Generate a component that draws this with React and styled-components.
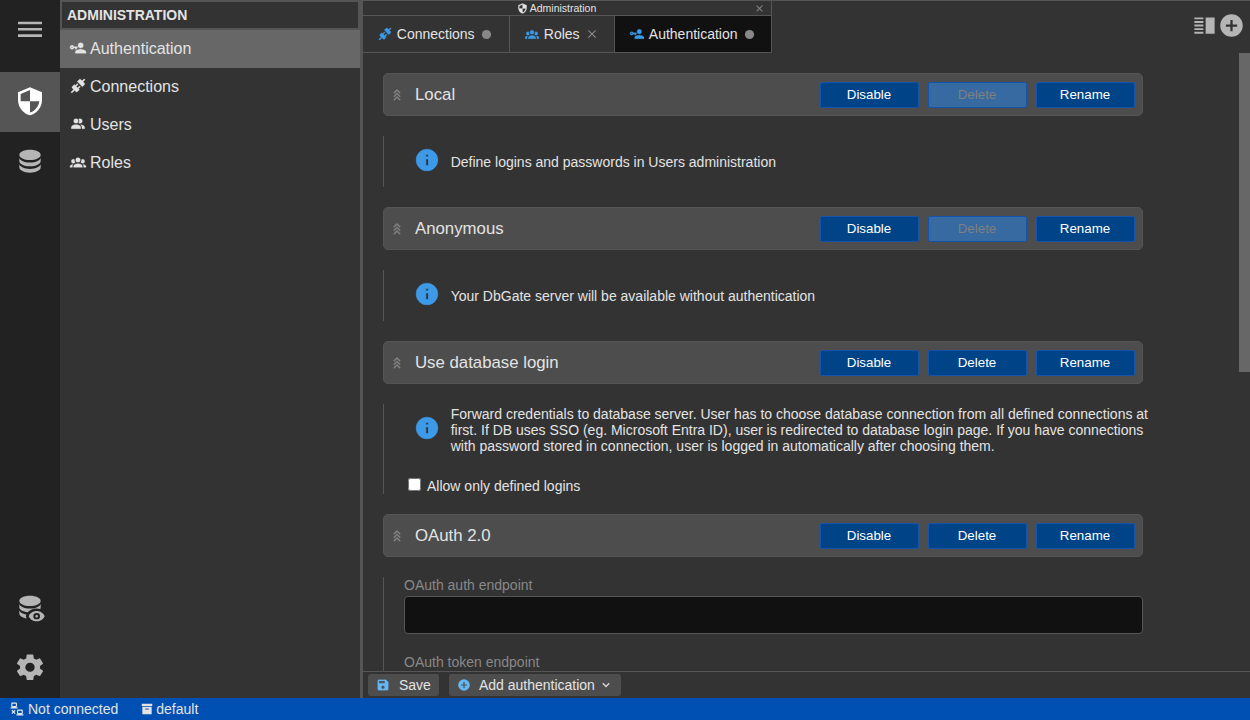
import React from 'react';
import styled, { createGlobalStyle, css } from 'styled-components';

const GlobalStyle = createGlobalStyle`
  * { box-sizing: border-box; }
  body {
    margin: 0;
    background: #333;
    color: #e3e3e3;
    font-family: "Liberation Sans", Arial, sans-serif;
    font-size: 14px;
    overflow: hidden;
  }
`;

const CIRCLE = 'M12,2A10,10 0 0,0 2,12A10,10 0 0,0 12,22A10,10 0 0,0 22,12A10,10 0 0,0 12,2Z';

const icons = {
  menu: 'M3,6H21V8H3V6M3,11H21V13H3V11M3,16H21V18H3V16Z',
  shield: 'M12,12H19C18.47,16.11 15.72,19.78 12,20.92V12H5V6.3L12,3.19M12,1L3,5V11C3,16.55 6.84,21.73 12,23C17.16,21.73 21,16.55 21,11V5L12,1Z',
  database: 'M12,3C7.58,3 4,4.79 4,7C4,9.21 7.58,11 12,11C16.42,11 20,9.21 20,7C20,4.79 16.42,3 12,3M4,9V12C4,14.21 7.58,16 12,16C16.42,16 20,14.21 20,12V9C20,11.21 16.42,13 12,13C7.58,13 4,11.21 4,9M4,14V17C4,19.21 7.58,21 12,21C16.42,21 20,19.21 20,17V14C20,16.21 16.42,18 12,18C7.58,18 4,16.21 4,14Z',
  databaseEye: 'M12,3C7.58,3 4,4.79 4,7C4,9.21 7.58,11 12,11C16.42,11 20,9.21 20,7C20,4.79 16.42,3 12,3M4,9V12C4,13.9 6.65,15.5 10.2,15.9C11.9,14.1 14.3,13 17,13C18,13 18.9,13.15 19.75,13.4C19.9,13 20,12.4 20,12V9C20,11.21 16.42,13 12,13C7.58,13 4,11.21 4,9M4,14V17C4,18.9 6.6,20.5 9.5,20.9L8.85,19L9.3,17.75C6.2,17.2 4,15.8 4,14M17,15C14.27,15 11.94,16.66 11,19C11.94,21.34 14.27,23 17,23C19.73,23 22.06,21.34 23,19C22.06,16.66 19.73,15 17,15M17,21.5A2.5,2.5 0 0,1 14.5,19A2.5,2.5 0 0,1 17,16.5A2.5,2.5 0 0,1 19.5,19A2.5,2.5 0 0,1 17,21.5M17,18A1,1 0 0,0 16,19A1,1 0 0,0 17,20A1,1 0 0,0 18,19A1,1 0 0,0 17,18Z',
  cog: 'M12,15.5A3.5,3.5 0 0,1 8.5,12A3.5,3.5 0 0,1 12,8.5A3.5,3.5 0 0,1 15.5,12A3.5,3.5 0 0,1 12,15.5M19.43,12.97C19.47,12.65 19.5,12.33 19.5,12C19.5,11.67 19.47,11.34 19.43,11L21.54,9.37C21.73,9.22 21.78,8.95 21.66,8.73L19.66,5.27C19.54,5.05 19.27,4.96 19.05,5.05L16.56,6.05C16.04,5.66 15.5,5.32 14.87,5.07L14.5,2.42C14.46,2.18 14.25,2 14,2H10C9.75,2 9.54,2.18 9.5,2.42L9.13,5.07C8.5,5.32 7.96,5.66 7.44,6.05L4.95,5.05C4.73,4.96 4.46,5.05 4.34,5.27L2.34,8.73C2.21,8.95 2.27,9.22 2.46,9.37L4.57,11C4.53,11.34 4.5,11.67 4.5,12C4.5,12.33 4.53,12.65 4.57,12.97L2.46,14.63C2.27,14.78 2.21,15.05 2.34,15.27L4.34,18.73C4.46,18.95 4.73,19.03 4.95,18.95L7.44,17.94C7.96,18.34 8.5,18.68 9.13,18.93L9.5,21.58C9.54,21.82 9.75,22 10,22H14C14.25,22 14.46,21.82 14.5,21.58L14.87,18.93C15.5,18.67 16.04,18.34 16.56,17.94L19.05,18.95C19.27,19.03 19.54,18.95 19.66,18.73L21.66,15.27C21.78,15.05 21.73,14.78 21.54,14.63L19.43,12.97Z',
  connection: 'M21.4 7.5C22.2 8.3 22.2 9.6 21.4 10.3L18.6 13.1L10.8 5.3L13.6 2.5C14.4 1.7 15.7 1.7 16.4 2.5L18.2 4.3L21.2 1.3L22.6 2.7L19.6 5.7L21.4 7.5M15.6 13.3L14.2 11.9L11.4 14.7L9.3 12.6L12.1 9.8L10.7 8.4L7.9 11.2L6.4 9.8L3.6 12.6C2.8 13.4 2.8 14.7 3.6 15.4L5.4 17.2L1.4 21.2L2.8 22.6L6.8 18.6L8.6 20.4C9.4 21.2 10.7 21.2 11.4 20.4L14.2 17.6L12.8 16.2L15.6 13.3Z',
  users: 'M16 17V19H2V17S2 13 9 13 16 17 16 17M12.5 7.5A3.5 3.5 0 1 0 9 11A3.5 3.5 0 0 0 12.5 7.5M15.94 13A5.32 5.32 0 0 1 18 17V19H22V17S22 13.37 15.94 13M15 4A3.39 3.39 0 0 0 13.07 4.59A5 5 0 0 1 13.07 10.41A3.39 3.39 0 0 0 15 11A3.5 3.5 0 0 0 15 4Z',
  roles: 'M12,5.5A3.5,3.5 0 0,1 15.5,9A3.5,3.5 0 0,1 12,12.5A3.5,3.5 0 0,1 8.5,9A3.5,3.5 0 0,1 12,5.5M5,8C5.56,8 6.08,8.15 6.53,8.42C6.38,9.85 6.8,11.27 7.66,12.38C7.16,13.34 6.16,14 5,14A3,3 0 0,1 2,11A3,3 0 0,1 5,8M19,8A3,3 0 0,1 22,11A3,3 0 0,1 19,14C17.84,14 16.84,13.34 16.34,12.38C17.2,11.27 17.62,9.85 17.47,8.42C17.92,8.15 18.44,8 19,8M5.5,18.25C5.5,16.18 8.41,14.5 12,14.5C15.59,14.5 18.5,16.18 18.5,18.25V20H5.5V18.25M0,20V18.5C0,17.11 1.89,15.94 4.45,15.6C3.86,16.28 3.5,17.22 3.5,18.25V20H0M24,20H20.5V18.25C20.5,17.22 20.14,16.28 19.55,15.6C22.11,15.94 24,17.11 24,18.5V20Z',
  auth: 'M11 10V12H10V14H8V12H5.83C5.42 13.17 4.31 14 3 14A3 3 0 0 1 0 11A3 3 0 0 1 3 8C4.31 8 5.42 8.83 5.83 10H11M3 10A1 1 0 0 0 2 11A1 1 0 0 0 3 12A1 1 0 0 0 4 11A1 1 0 0 0 3 10M16 14C18.67 14 24 15.34 24 18V20H8V18C8 15.34 13.33 14 16 14M16 12A4 4 0 0 1 12 8A4 4 0 0 1 16 4A4 4 0 0 1 20 8A4 4 0 0 1 16 12Z',
  info: 'M13,9H11V7H13M13,17H11V11H13M' + CIRCLE.slice(1),
  plus: 'M17,13H13V17H11V13H7V11H11V7H13V11H17M' + CIRCLE.slice(1),
  dot: CIRCLE,
  close: 'M19,6.41L17.59,5L12,10.59L6.41,5L5,6.41L10.59,12L5,17.59L6.41,19L12,13.41L17.59,19L19,17.59L13.41,12L19,6.41Z',
  tripleUp: 'M16.59,9.42L12,4.83L7.41,9.42L6,8L12,2L18,8L16.59,9.42M16.59,15.42L12,10.83L7.41,15.42L6,14L12,8L18,14L16.59,15.42M16.59,21.42L12,16.83L7.41,21.42L6,20L12,14L18,20L16.59,21.42Z',
  save: 'M15,9H5V5H15M12,19A3,3 0 0,1 9,16A3,3 0 0,1 12,13A3,3 0 0,1 15,16A3,3 0 0,1 12,19M17,3H5C3.89,3 3,3.9 3,5V19A2,2 0 0,0 5,21H19A2,2 0 0,0 21,19V7L17,3Z',
  chevronDown: 'M7.41,8.58L12,13.17L16.59,8.58L18,10L12,16L6,10L7.41,8.58Z',
  archive: 'M3,3H21V7H3V3M4,8H20V21H4V8M9.5,11A0.5,0.5 0 0,0 9,11.5V13H15V11.5A0.5,0.5 0 0,0 14.5,11H9.5Z',
  disconnected: 'M4,1C2.89,1 2,1.89 2,3V7C2,8.11 2.89,9 4,9H1V11H13V9H10C11.11,9 12,8.11 12,7V3C12,1.89 11.11,1 10,1H4M4,3H10V7H4V3M14,13C12.89,13 12,13.89 12,15V19C12,20.11 12.89,21 14,21H11V23H23V21H20C21.11,21 22,20.11 22,19V15C22,13.89 21.11,13 20,13H14M3.88,13.46L2.46,14.88L4.59,17L2.46,19.12L3.88,20.54L6,18.41L8.12,20.54L9.54,19.12L7.41,17L9.54,14.88L8.12,13.46L6,15.59L3.88,13.46M14,15H20V19H14V15Z',
  split: 'M3,4.8H11V6.5H3V4.8M3,8H11V9.7H3V8M3,11.2H11V12.9H3V11.2M3,14.4H11V16.1H3V14.4M3,17.6H11V19.3H3V17.6M13,4.8H21V19.3H13V4.8Z',
};

const Glyph = styled.svg`
  display: block;
  flex: none;
  width: ${p => p.$size}px;
  height: ${p => p.$height || p.$size}px;
  overflow: visible;
  fill: ${p => p.$color || 'currentColor'};
  stroke: ${p => p.$color || 'currentColor'};
  stroke-width: ${p => (p.$bold ? 0.5 : 0)};
`;

const Icon = ({ name, size = 16, height, color, bold }) => (
  <Glyph
    viewBox="0 0 24 24"
    preserveAspectRatio="none"
    $size={size}
    $height={height}
    $color={color}
    $bold={bold}
    aria-hidden="true"
  >
    <path fillRule="evenodd" d={icons[name]} />
  </Glyph>
);

const Screen = styled.div`
  display: flex;
  flex-direction: column;
  width: 1250px;
  height: 720px;
  overflow: hidden;
`;

const Workspace = styled.div`
  display: flex;
  height: 698px;
`;

const Rail = styled.nav`
  display: flex;
  flex-direction: column;
  width: 60px;
  background: #222;
  color: #b5b5b5;
`;

const RailItem = styled.div`
  display: flex;
  align-items: center;
  justify-content: center;
  height: 60px;
  padding-bottom: 1px;
  ${p => p.$first && css`margin-bottom: 12px;`}
  ${p => p.$active && css`background: #555; color: #fff;`}
`;

const RailSpacer = styled.div`
  flex: 1;
`;

const Sidebar = styled.aside`
  width: 300px;
  background: #333;
`;

const SidebarTitle = styled.div`
  height: 30px;
  padding: 0 5px;
  border: 2px solid #555;
  font-weight: bold;
  line-height: 26px;
`;

const NavRow = styled.div`
  display: flex;
  align-items: center;
  gap: 4px;
  height: 38px;
  padding: 0 10px 1px;
  font-size: 16px;
  background: ${p => (p.$active ? '#676767' : 'transparent')};
`;

const NavIcon = styled.span`
  padding-bottom: 1px;
`;

const Splitter = styled.div`
  width: 3px;
  background: #555;
`;

const Main = styled.main`
  display: flex;
  flex-direction: column;
  width: 887px;
  border-top: 1px solid #555;
`;

const TopBar = styled.div`
  display: flex;
  justify-content: space-between;
  height: 52px;
`;

const TabGroup = styled.div`
  width: 409px;
  border-right: 1px solid #555;
  border-bottom: 1px solid #555;
`;

const GroupTitle = styled.div`
  display: flex;
  align-items: center;
  height: 15px;
  padding: 0 6px 0 0;
  border-bottom: 1px solid #555;
  font-size: 10.5px;
`;

const GroupLabel = styled.div`
  display: flex;
  flex: 1;
  align-items: center;
  justify-content: center;
  gap: 2px;
  padding-right: 4px;
`;

const Tabs = styled.div`
  display: flex;
  height: 36px;
`;

const Tab = styled.div`
  display: flex;
  align-items: center;
  width: ${p => p.$width}px;
  padding-left: 15px;
  border-right: ${p => (p.$active ? 'none' : '1px solid #555')};
  background: ${p => (p.$active ? '#111' : '#333')};
`;

const TabLabel = styled.span`
  margin: 0 ${p => p.$gap || 6.7}px 0 4.8px;
`;

const TopActions = styled.div`
  display: flex;
  align-items: center;
  padding: 0 5px 3px 0;
  color: #b5b5b5;
`;

const ScrollArea = styled.div`
  display: flex;
  justify-content: space-between;
  height: 618px;
  overflow: hidden;
`;

const MethodList = styled.div`
  width: 800px;
  padding: 20px;
`;

const ScrollThumb = styled.div`
  width: 11px;
  height: 319px;
  background: #676767;
`;

const CardHeader = styled.div`
  display: flex;
  align-items: center;
  height: 43px;
  padding: 0 7px 0 6px;
  border: 1px solid #555;
  border-radius: 5px;
  background: #4d4d4d;
`;

const CardTitle = styled.div`
  flex: 1;
  margin-left: 11px;
  font-size: 16.8px;
`;

const Actions = styled.div`
  display: flex;
  gap: 9px;
`;

const Button = styled.button`
  width: 99px;
  height: 26px;
  padding: 0 1px 0 0;
  border: 1px solid #1554ad;
  border-radius: 2px;
  outline: 0;
  background: #004488;
  color: #fff;
  font: 13.333px "Liberation Sans", Arial, sans-serif;
  &:disabled {
    background: #366aa0;
    color: #808080;
  }
`;

const CardBody = styled.div`
  width: 790px;
  height: ${p => p.$height}px;
  margin: 20px 0;
  padding-left: 20px;
  border-left: 1px solid #555;
`;

const InfoRow = styled.div`
  display: flex;
  align-items: center;
  gap: 10.7px;
  height: 51px;
  padding-left: 10px;
`;

const InfoText = styled.div`
  width: 706px;
  line-height: 16px;
`;

const InfoIcon = styled.div`
  padding-bottom: 3px;
`;

const CheckRow = styled.label`
  display: flex;
  align-items: center;
  gap: 6px;
  height: 20px;
  margin-top: 21px;
  padding-left: 4px;
`;

const Checkbox = styled.input`
  width: 13px;
  height: 13px;
  margin: 0 0 3px;
`;

const Field = styled.label`
  display: block;
  width: 739px;
  height: 77px;
  color: #888;
  line-height: 16px;
`;

const FieldInput = styled.input`
  display: block;
  width: 739px;
  height: 38px;
  margin-top: 3px;
  border: 1px solid #555;
  border-radius: 4px;
  background: #111;
  color: #e3e3e3;
`;

const Toolbar = styled.div`
  display: flex;
  gap: 10px;
  height: 27px;
  padding: 2px 5px;
  border-top: 1px solid #555;
`;

const ToolButton = styled.div`
  display: flex;
  align-items: center;
  height: 22px;
  padding: 0 8px;
  border-radius: 3px;
  background: #4d4d4d;
`;

const ToolLabel = styled.span`
  margin: 0 ${p => p.$after || 0}px 0 ${p => p.$before || 9}px;
`;

const StatusBar = styled.footer`
  display: flex;
  gap: 21.5px;
  height: 22px;
  padding-left: 10px;
  background: #0050b3;
`;

const StatusItem = styled.div`
  display: flex;
  align-items: center;
  gap: ${p => p.$gap}px;
`;

const navItems = [
  ['auth', 'Authentication'],
  ['connection', 'Connections'],
  ['users', 'Users'],
  ['roles', 'Roles'],
];

const RailIcon = ({ name }) => <Icon name={name} size={32} height={30.5} />;

const Method = ({ title, locked, height, children }) => (
  <section>
    <CardHeader>
      <Icon name="tripleUp" size={14} color="#888" bold />
      <CardTitle>{title}</CardTitle>
      <Actions>
        <Button>Disable</Button>
        <Button disabled={locked}>Delete</Button>
        <Button>Rename</Button>
      </Actions>
    </CardHeader>
    <CardBody $height={height}>{children}</CardBody>
  </section>
);

const Info = ({ children }) => (
  <InfoRow>
    <InfoIcon><Icon name="info" size={26} color="#3c9ae8" bold /></InfoIcon>
    <InfoText>{children}</InfoText>
  </InfoRow>
);

export default function App() {
  return (
    <Screen>
      <GlobalStyle />
      <Workspace>
        <Rail>
          <RailItem $first><RailIcon name="menu" /></RailItem>
          <RailItem $active><RailIcon name="shield" /></RailItem>
          <RailItem><RailIcon name="database" /></RailItem>
          <RailSpacer />
          <RailItem><RailIcon name="databaseEye" /></RailItem>
          <RailItem><RailIcon name="cog" /></RailItem>
        </Rail>
        <Sidebar>
          <SidebarTitle>ADMINISTRATION</SidebarTitle>
          {navItems.map(([icon, label], i) => (
            <NavRow key={label} $active={i === 0}>
              <NavIcon><Icon name={icon} bold /></NavIcon>
              {label}
            </NavRow>
          ))}
        </Sidebar>
        <Splitter />
        <Main>
          <TopBar>
            <TabGroup>
              <GroupTitle>
                <GroupLabel><Icon name="shield" size={11} bold />Administration</GroupLabel>
                <Icon name="close" size={11} color="#888" />
              </GroupTitle>
              <Tabs>
                <Tab $width={147}>
                  <Icon name="connection" size={14} color="#3c9ae8" bold />
                  <TabLabel>Connections</TabLabel>
                  <Icon name="dot" size={11} color="#888" />
                </Tab>
                <Tab $width={105}>
                  <Icon name="roles" size={14} color="#3c9ae8" bold />
                  <TabLabel $gap={5.4}>Roles</TabLabel>
                  <Icon name="close" size={14} color="#888" />
                </Tab>
                <Tab $width={156} $active>
                  <Icon name="auth" size={14} color="#3c9ae8" bold />
                  <TabLabel>Authentication</TabLabel>
                  <Icon name="dot" size={11} color="#888" />
                </Tab>
              </Tabs>
            </TabGroup>
            <TopActions>
              <Icon name="split" size={27} />
              <Icon name="plus" size={27} />
            </TopActions>
          </TopBar>
          <ScrollArea>
            <MethodList>
              <Method title="Local" locked height={51}>
                <Info>Define logins and passwords in Users administration</Info>
              </Method>
              <Method title="Anonymous" locked height={51}>
                <Info>Your DbGate server will be available without authentication</Info>
              </Method>
              <Method title="Use database login" height={90}>
                <Info>
                  Forward credentials to database server. User has to choose database connection from all defined connections at
                  first. If DB uses SSO (eg. Microsoft Entra ID), user is redirected to database login page. If you have connections
                  with password stored in connection, user is logged in automatically after choosing them.
                </Info>
                <CheckRow><Checkbox type="checkbox" />Allow only defined logins</CheckRow>
              </Method>
              <Method title="OAuth 2.0" height={200}>
                <Field>OAuth auth endpoint<FieldInput /></Field>
                <Field>OAuth token endpoint<FieldInput /></Field>
              </Method>
            </MethodList>
            <ScrollThumb />
          </ScrollArea>
          <Toolbar>
            <ToolButton>
              <Icon name="save" size={14} color="#65b7f3" bold />
              <ToolLabel>Save</ToolLabel>
            </ToolButton>
            <ToolButton>
              <Icon name="plus" size={14} color="#65b7f3" />
              <ToolLabel $before={8} $after={4}>Add authentication</ToolLabel>
              <Icon name="chevronDown" size={14} bold />
            </ToolButton>
          </Toolbar>
        </Main>
      </Workspace>
      <StatusBar>
        <StatusItem $gap={4}><Icon name="disconnected" size={14} />Not connected</StatusItem>
        <StatusItem $gap={2.5}><Icon name="archive" size={14} />default</StatusItem>
      </StatusBar>
    </Screen>
  );
}
